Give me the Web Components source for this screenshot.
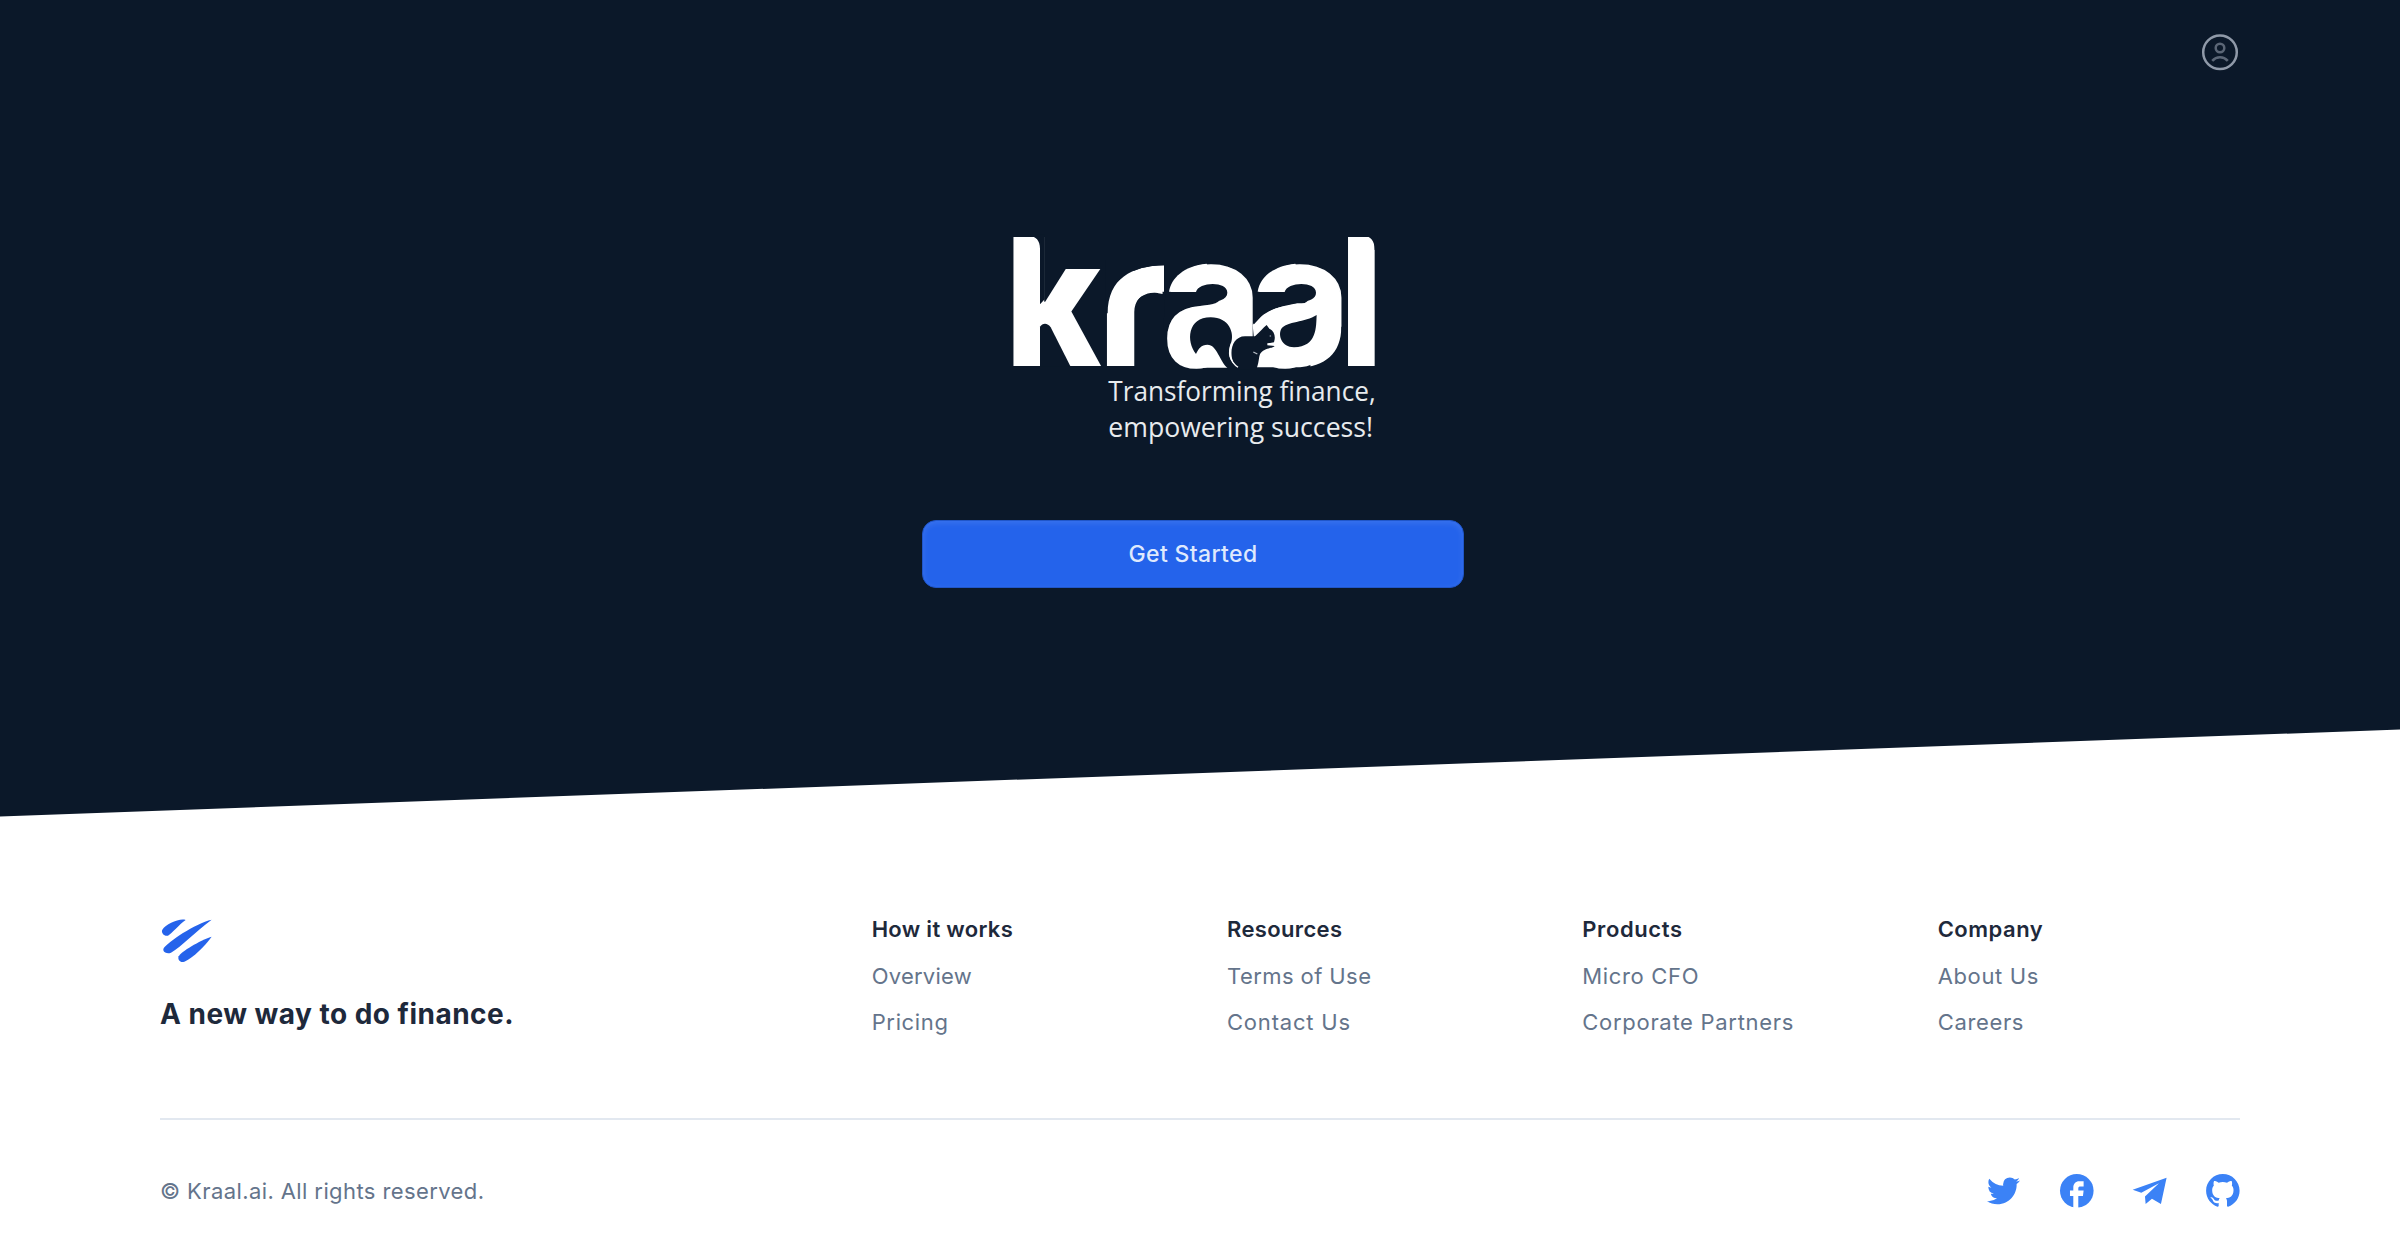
<!DOCTYPE html>
<html lang="en"><head><meta charset="utf-8"><title>Kraal</title>
<style>html,body{margin:0;background:#fff}body{font-family:Inter,"Liberation Sans",sans-serif}</style></head>
<body>
<kraal-page>
  <kraal-hero slot="hero"></kraal-hero>
  <kraal-footer slot="footer"></kraal-footer>
</kraal-page>
<script>
const define=(name,html)=>customElements.define(name,class extends HTMLElement{
  connectedCallback(){ if(!this.shadowRoot) this.attachShadow({mode:'open'}).innerHTML=html; }
});

define('kraal-page',`<style>:host{display:flex;flex-direction:column;width:2400px;height:1260px;overflow:hidden;background:#fff}::slotted(*){flex:none}</style>
<slot name="hero"></slot><slot name="footer"></slot>`);

define('user-avatar',`<style>:host{display:block;width:38px;height:38px}svg{display:block}</style>
<svg width="38" height="38" viewBox="0 0 38 38" fill="none" stroke="#8f99a8" stroke-width="2.500">
<circle cx="19" cy="19.300" r="16.800"/><g stroke="#5b6676"><circle cx="19" cy="15" r="4.300"/><path d="M11.200 27.900C13.400 25.500 16 24.300 19 24.300s5.600 1.200 7.800 3.600"/></g></svg>`);

define('kraal-wordmark',`<style>:host{display:block;width:420px;height:250px;margin-right:-1px}svg{display:block}</style>
<svg width="420" height="250" viewBox="0 0 1260 750">
<g transform="scale(.88 1)"><text y="467" fill="#fff" font-family="Inter" font-weight="900" font-size="548"><tspan x="88" font-size="532">k</tspan><tspan x="402" font-size="545" font-weight="760">r</tspan><tspan x="627" stroke="#fff" stroke-width="5">a</tspan><tspan x="930" stroke="#fff" stroke-width="5">a</tspan><tspan x="1225" font-size="532" font-weight="800">l</tspan></text></g>
<g fill="#fff">
<path d="M585 435C600 460 625 473 660 473H752L775 380H600Z"/>
<path d="M567 245C573 205 610 168 680 161L700 205 648 245Z"/><path d="M833 245C839 205 876 168 946 161L966 205 914 245Z"/>
<path d="M818 345C850 300 900 290 950 280H1040V400C1040 440 1010 472 950 472H830Z"/>
<path d="M383 310C384 205 455 168 552 166V245C490 245 461 262 461 310V340H383Z"/>
</g>
<g fill="#0b1829">
<path d="M146 74H194V268L180 283V116C180 92 168 78 146 78Z"/><path d="M1150 74H1192V120H1184C1184 92 1172 78 1150 78Z"/>
<path d="M180 470V350C188 338 203 338 212 352L272 470Z"/>
<path d="M376 150H553V166C455 168 384 205 383 310H376Z"/>
<path d="M556 246H648C655 215 742 212 742 248C742 292 620 270 577 320C567 332 561 345 557 360H550Z"/>
<path d="M822 246H914C921 215 1008 212 1008 248C1008 292 890 266 845 318L822 343Z"/>
<path d="M1084 350C1084 430 1035 470 955 474H1095V350Z"/>
<path d="M1010 315C1008 350 1012 410 942 412C905 412 892 375 905 355C920 335 975 337 1010 315Z"/>
<path d="M648 432C618 395 622 322 692 322C748 322 764 370 753 400C741 430 745 450 776 476H745C718 455 712 404 682 404C664 404 655 416 648 432Z"/>
<path d="M773 478C742 446 750 379 795 379H825C838 368 850 352 860 345L868 356C880 362 886 374 884 388L882 397 862 400V406L884 408C878 416 862 412 845 426C834 436 840 450 829 478Z"/>
</g>
<path d="M755 398C744 428 747 452 774 472" fill="none" stroke="#fff" stroke-width="4"/>
<circle cx="871" cy="378" r="2.500" fill="#8d96a3"/><path d="M820 426L832 432" stroke="#b7bec7" stroke-width="4"/>
<g fill="#e8ebee" font-family="Open Sans" font-size="84"><text x="385" y="573" textLength="802" lengthAdjust="spacingAndGlyphs">Transforming finance,</text>
<text x="385" y="680" textLength="794" lengthAdjust="spacingAndGlyphs">empowering success!</text></g>
</svg>`);

define('cta-button',`<style>:host{display:flex;align-items:center;justify-content:center;box-sizing:border-box;width:542px;height:68px;border-radius:14px;background:#2463eb;border:1px solid #2056c8;box-shadow:inset 0 2px 6px rgba(255,255,255,.11);color:#dfe9fd;font-size:23px;font-weight:500;line-height:30px;letter-spacing:.35px}</style><slot></slot>`);

define('kraal-hero',`<style>:host{display:flex;flex-direction:column;box-sizing:border-box;height:817px;padding:33px 161px 0 160px;background:#0b1829;clip-path:polygon(0 0,100% 0,100% 729.500px,0 816.500px)}
header{display:flex;justify-content:flex-end;height:177px}
main{display:flex;flex-direction:column;align-items:center;gap:60px;padding-right:21px}
cta-button{margin-left:8px}</style>
<header><user-avatar></user-avatar></header><main><kraal-wordmark></kraal-wordmark><cta-button>Get Started</cta-button></main>`);

define('brand-mark',`<style>:host{display:block}svg{display:block}</style>
<svg width="53.330" height="46.670" viewBox="60 80 160 140" fill="#2563eb"><path d="M137 86C118 80 78 98 67 115C62 124 73 136 84 133C96 126 115 102 137 86Z"/><path d="M215 85C165 96 84 152 71 171C66 181 80 190 93 184C125 165 165 122 215 85Z"/><path d="M215 136C178 148 124 180 116 195C112 206 122 216 133 211C163 196 191 168 215 136Z"/></svg>`);

define('link-column',`<style>:host{display:flex;flex-direction:column;font-size:22px;line-height:46.700px;color:#64748b;font-weight:400;white-space:nowrap;letter-spacing:.65px}
::slotted(h6){margin:0;font:inherit;font-weight:600;color:#1e293b}::slotted(a){color:inherit}</style><slot></slot>`);

define('social-links',`<style>:host{display:flex;gap:39.700px;color:#3b82f6}svg{display:block;width:33.600px;height:33.600px;fill:currentColor;overflow:visible}</style>
<svg viewBox="2 2 20 20"><path d="M19.633 7.997c.013.175.013.349.013.523 0 5.325-4.053 11.461-11.460 11.461-2.282 0-4.402-.661-6.186-1.809.324.037.636.050.973.050a8.070 8.070 0 0 0 5.001-1.721 4.036 4.036 0 0 1-3.767-2.793c.249.037.499.062.761.062.361 0 .724-.050 1.061-.137a4.027 4.027 0 0 1-3.230-3.953v-.050c.537.299 1.160.486 1.820.511a4.022 4.022 0 0 1-1.796-3.354c0-.748.199-1.434.548-2.032a11.457 11.457 0 0 0 8.306 4.215c-.062-.300-.100-.611-.100-.923a4.026 4.026 0 0 1 4.028-4.028c1.160 0 2.207.486 2.943 1.272a7.957 7.957 0 0 0 2.556-.973 4.020 4.020 0 0 1-1.771 2.220 8.073 8.073 0 0 0 2.319-.624 8.645 8.645 0 0 1-2.019 2.083z"/></svg>
<svg viewBox="300 69.500 101 101"><circle cx="350.500" cy="120" r="50.500"/><path fill="#fff" d="M340 172V136H330V119H340V111C340 98 347 91 358 91H371V107H362C357 107 355 109 355 113V119H371L369 136H355V172Z"/></svg>
<svg viewBox="520 69.500 101 101"><path d="M519 117L621 81L604 160L577 144L558 160L556 137L598 97L545 126Z"/></svg>
<svg viewBox="2 2 20 20"><path d="M12.026 2c-5.509 0-9.974 4.465-9.974 9.974 0 4.406 2.857 8.145 6.821 9.465.499.090.679-.217.679-.481 0-.237-.008-.865-.011-1.696-2.775.602-3.361-1.338-3.361-1.338-.452-1.152-1.107-1.459-1.107-1.459-.905-.619.069-.605.069-.605 1.002.070 1.527 1.028 1.527 1.028.890 1.524 2.336 1.084 2.902.829.091-.645.351-1.085.635-1.334-2.214-.251-4.542-1.107-4.542-4.930 0-1.087.389-1.979 1.024-2.675-.101-.253-.446-1.268.099-2.640 0 0 .837-.269 2.742 1.021a9.582 9.582 0 0 1 2.496-.336 9.554 9.554 0 0 1 2.496.336c1.906-1.291 2.742-1.021 2.742-1.021.545 1.372.203 2.387.099 2.640.640.696 1.024 1.587 1.024 2.675 0 3.833-2.330 4.675-4.552 4.922.355.308.675.916.675 1.846 0 1.334-.012 2.410-.012 2.737 0 .267.178.577.687.479C19.146 20.115 22 16.379 22 11.974 22 6.465 17.535 2 12.026 2z"/></svg>`);

define('kraal-footer',`<style>:host{display:flex;flex-direction:column;padding:0 160px}
.top{display:grid;grid-template-columns:repeat(6,1fr);column-gap:52px;height:301px;border-bottom:2px solid #e2e8f0}
.brand{grid-column:span 2;padding-top:100.500px}
.brand p{margin:33px 0 0;font-size:28px;line-height:34px;font-weight:700;letter-spacing:.48px;color:#1e293b}
link-column{padding:89px 0 0 1px}
.bottom{display:flex;justify-content:space-between;align-items:center;height:141px;font-size:22px;font-weight:400;letter-spacing:.4px;color:#64748b}</style>
<div class="top"><div class="brand"><brand-mark></brand-mark><p>A new way to do finance.</p></div>
<link-column><h6 style="letter-spacing:.3px">How it works</h6><a style="letter-spacing:.25px">Overview</a><a>Pricing</a></link-column>
<link-column><h6 style="letter-spacing:.35px">Resources</h6><a style="letter-spacing:.42px">Terms of Use</a><a style="letter-spacing:.8px">Contact Us</a></link-column>
<link-column><h6 style="letter-spacing:.6px">Products</h6><a>Micro CFO</a><a style="letter-spacing:.7px">Corporate Partners</a></link-column>
<link-column><h6 style="letter-spacing:.5px">Company</h6><a>About Us</a><a>Careers</a></link-column></div>
<div class="bottom"><span>© Kraal.ai. All rights reserved.</span><social-links></social-links></div>`);
</script>
</body></html>
